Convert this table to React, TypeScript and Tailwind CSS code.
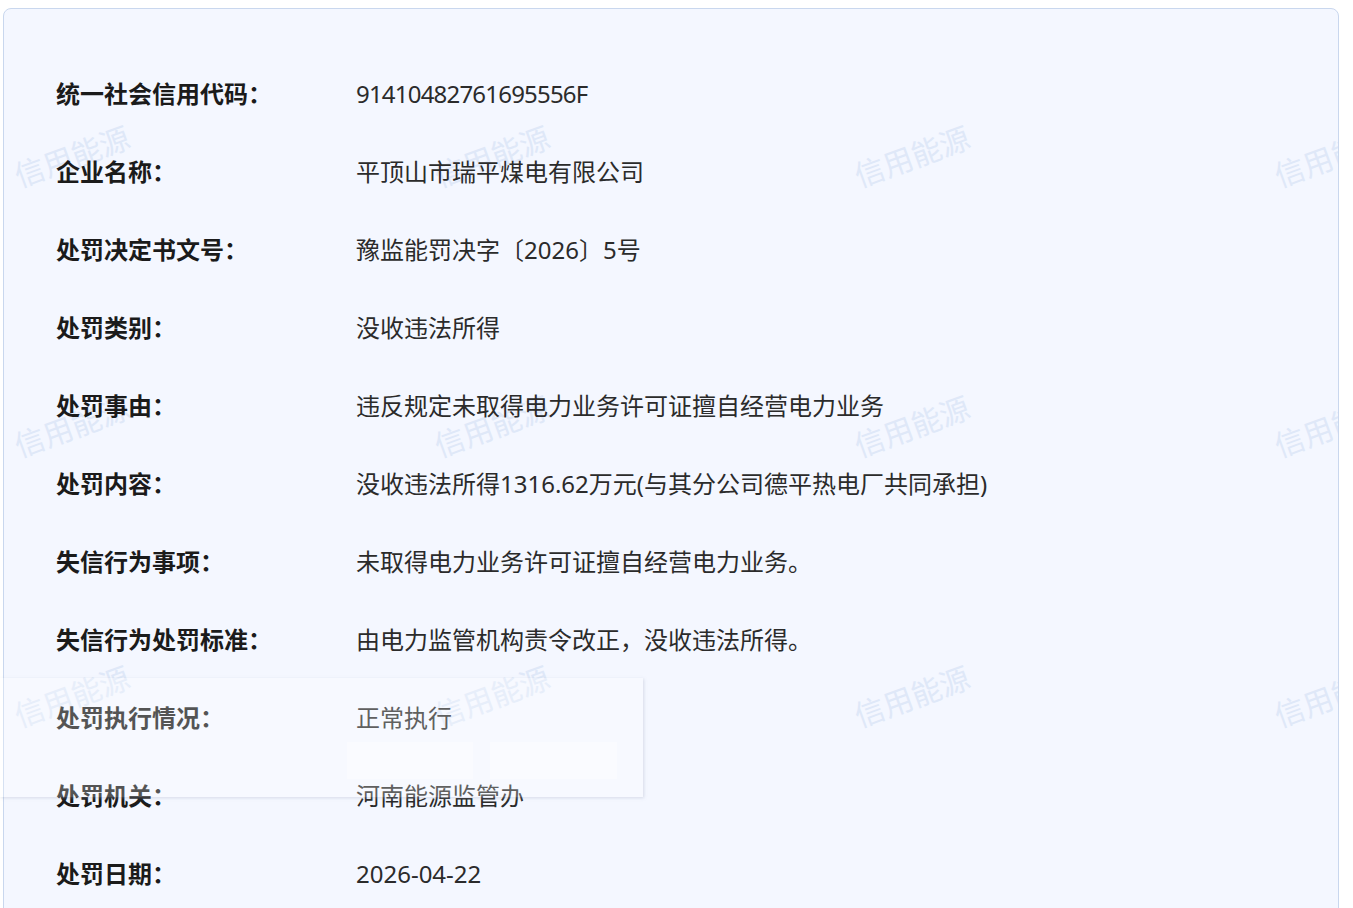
const rows: [string, string][] = [
  ['统一社会信用代码：', '91410482761695556F'],
  ['企业名称：', '平顶山市瑞平煤电有限公司'],
  ['处罚决定书文号：', '豫监能罚决字〔2026〕5号'],
  ['处罚类别：', '没收违法所得'],
  ['处罚事由：', '违反规定未取得电力业务许可证擅自经营电力业务'],
  ['处罚内容：', '没收违法所得1316.62万元(与其分公司德平热电厂共同承担)'],
  ['失信行为事项：', '未取得电力业务许可证擅自经营电力业务。'],
  ['失信行为处罚标准：', '由电力监管机构责令改正，没收违法所得。'],
  ['处罚执行情况：', '正常执行'],
  ['处罚机关：', '河南能源监管办'],
  ['处罚日期：', '2026-04-22'],
];

export default function App() {
  return (
    <div
      className="relative h-[908px] overflow-hidden bg-white pt-2 pl-[3px] pr-[14px]"
      style={{ fontFamily: '"Noto Sans", "Noto Sans CJK SC", sans-serif' }}
    >
      <div className="relative min-h-[920px] overflow-hidden rounded-t-lg border border-[#c9d7ee] bg-[#f4f7ff] pl-[52px] pt-[46px]">
        {/* watermark tiles, behind the text */}
        <div className="pointer-events-none absolute -left-[142px] top-[12px] grid w-[1680px] grid-cols-4 auto-rows-[270px]">
          {Array.from({ length: 12 }).map((_, i) => (
            <div key={i} className="flex items-center justify-center">
              <span className="-rotate-[20deg] whitespace-nowrap text-[30px] text-[#dfe8f8]">
                信用能源
              </span>
            </div>
          ))}
        </div>

        <div className="relative flex flex-col">
          {rows.map(([label, value]) => (
            <div key={label} className="flex h-[78px] items-center text-[24px]">
              <div className="w-[300px] shrink-0 font-bold text-[#1b1b1b]">{label}</div>
              <div
                className={
                  value === '91410482761695556F'
                    ? 'tracking-[-0.8px] text-[#2b2b2b]'
                    : 'text-[#2b2b2b]'
                }
              >
                {value}
              </div>
            </div>
          ))}
        </div>
      </div>

      {/* faint ghost panel lying over the card */}
      <div className="pointer-events-none absolute left-0 top-[678px] flex h-[119px] w-[643px] items-end gap-[17px] bg-white/25 pb-[18px] pl-[347px] shadow-[1px_1px_3px_rgba(160,170,190,0.35)]">
        <div className="h-[37px] w-[126px] bg-white/40" />
        <div className="h-[37px] w-[127px] bg-white/40" />
      </div>
    </div>
  );
}
